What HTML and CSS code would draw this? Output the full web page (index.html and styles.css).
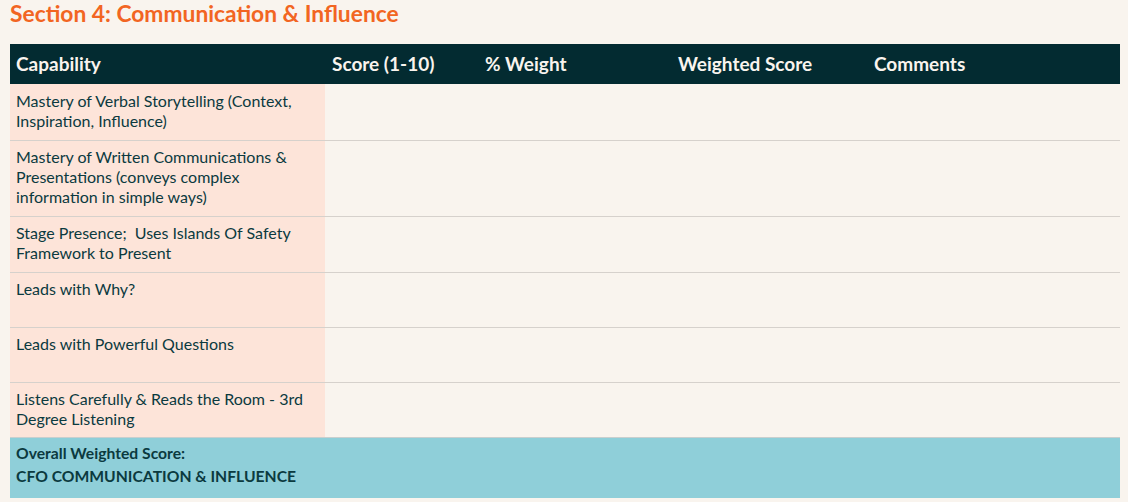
FILE: index.html
```html
<!DOCTYPE html>
<html lang="en">
<head>
<meta charset="utf-8">
<title>Section 4: Communication &amp; Influence</title>
<link rel="stylesheet" href="styles.css">
</head>
<body>
<h2 class="section-title">Section 4: Communication &amp; Influence</h2>
<table class="score-table">
  <colgroup>
    <col class="c-cap">
    <col class="c-score">
    <col class="c-weight">
    <col class="c-wscore">
    <col class="c-comments">
  </colgroup>
  <thead>
    <tr>
      <th>Capability</th>
      <th>Score (1-10)</th>
      <th>% Weight</th>
      <th>Weighted Score</th>
      <th>Comments</th>
    </tr>
  </thead>
  <tbody>
    <tr class="r-tall">
      <td class="cap">Mastery of Verbal Storytelling (Context, Inspiration, Influence)</td>
      <td></td><td></td><td></td><td></td>
    </tr>
    <tr class="r-xl">
      <td class="cap">Mastery of Written Communications &amp; Presentations (conveys complex information in simple ways)</td>
      <td></td><td></td><td></td><td></td>
    </tr>
    <tr class="r-tall">
      <td class="cap">Stage Presence;&nbsp; Uses Islands Of Safety Framework to Present</td>
      <td></td><td></td><td></td><td></td>
    </tr>
    <tr class="r-std">
      <td class="cap">Leads with Why?</td>
      <td></td><td></td><td></td><td></td>
    </tr>
    <tr class="r-std">
      <td class="cap">Leads with Powerful Questions</td>
      <td></td><td></td><td></td><td></td>
    </tr>
    <tr class="r-std">
      <td class="cap">Listens Carefully &amp; Reads the Room - 3rd Degree Listening</td>
      <td></td><td></td><td></td><td></td>
    </tr>
    <tr class="total">
      <td colspan="5">Overall Weighted Score:<br>CFO COMMUNICATION &amp; INFLUENCE</td>
    </tr>
  </tbody>
</table>
</body>
</html>
```

FILE: styles.css
```css
html, body {
  margin: 0;
  padding: 0;
  background: #f9f4ee;
}
body {
  padding: 0 8px 0 10px;
  font-family: "Lato", "Open Sans", sans-serif;
  color: #0b3a3f;
}
.section-title {
  margin: 0;
  height: 44px;
  padding-top: 0;
  box-sizing: border-box;
  font-size: 22.8px;
  line-height: 26px;
  font-weight: 700;
  color: #f26522;
}
.score-table {
  width: 1110px;
  border-collapse: collapse;
  table-layout: fixed;
}
.c-cap { width: 315px; }
.c-score { width: 153px; }
.c-weight { width: 193px; }
.c-wscore { width: 196px; }
.c-comments { width: 253px; }

.score-table th {
  background: #032b31;
  color: #f9f4ee;
  text-align: left;
  font-size: 19px;
  font-weight: 700;
  height: 40px;
  padding: 0 7px;
  box-sizing: border-box;
  line-height: 20px;
}
.score-table th:first-child { padding-left: 6px; }
.score-table td {
  vertical-align: top;
  padding: 6px 6px 0;
  font-size: 16px;
  line-height: 20px;
  border-top: 1px solid #d6d1cc;
  box-sizing: border-box;
}
.score-table tbody tr:first-child td {
  border-top: none;
  padding-top: 7px;
}
.r-tall td { height: 56px; }
.r-std td { height: 55px; }
.r-xl td { height: 76px; }
.score-table td.cap {
  background: #fde4d9;
}
.total td {
  background: #8fcfd9;
  font-size: 15.7px;
  font-weight: 700;
  line-height: 23px;
  height: 61px;
  padding-top: 4px;
  border-top: 1px solid #c9cfce;
}
```
